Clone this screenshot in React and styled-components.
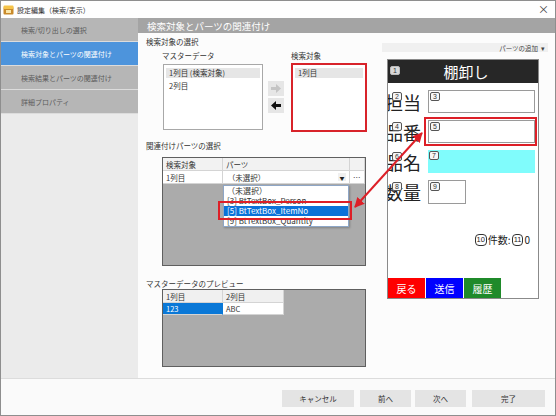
import React from 'react';
import styled, { createGlobalStyle } from 'styled-components';

const Global = createGlobalStyle`
  html, body { margin: 0; padding: 0; background: #fff; }
  body { font-family: "Noto Sans CJK JP", "Noto Sans", sans-serif; }
  * { box-sizing: border-box; }
`;

const Window = styled.div`
  position: relative;
  width: 556px;
  height: 416px;
  border: 1px solid #8e8e8e;
  background: #fafafa;
  display: flex;
  flex-direction: column;
  overflow: hidden;
`;

const TitleBar = styled.div`
  height: 17px;
  display: flex;
  align-items: center;
  padding: 0 6px 0 2px;
  background: #fefefe;
  font-size: 7px;
  color: #333;
  gap: 3px;
`;

const TitleText = styled.span`
  flex: 1;
`;

const Close = styled.span`
  font-size: 11px;
  color: #444;
  line-height: 1;
`;

const Body = styled.div`
  height: 360px;
  display: flex;
`;

const Sidebar = styled.div`
  width: 137px;
  background: #ebebeb;
  display: flex;
  flex-direction: column;
`;

const NavItem = styled.div`
  height: 24px;
  border-bottom: 1px solid #dcdcdc;
  background: ${p => (p.$active ? '#4d94dc' : '#b6b6b6')};
  color: ${p => (p.$active ? '#fff' : '#5c5c5c')};
  font-size: 7px;
  display: flex;
  align-items: center;
  padding-left: 20px;
`;

const Main = styled.div`
  flex: 1;
  display: flex;
  flex-direction: column;
`;

const HeaderBar = styled.div`
  height: 15px;
  background: #a4a4a4;
  color: #fff;
  font-size: 9.5px;
  display: flex;
  align-items: center;
  padding-left: 9px;
`;

const Content = styled.div`
  flex: 1;
  display: flex;
  background: #fcfcfc;
`;

const LeftCol = styled.div`
  width: 244px;
  padding-left: 8px;
  display: flex;
  flex-direction: column;
`;

const SectionTitle = styled.div`
  font-size: 7.5px;
  line-height: 12px;
  height: 12px;
  color: #333;
  margin-top: ${p => p.$mt || 0}px;
`;

const SelectRow = styled.div`
  display: flex;
  margin: 2px 0 0 16px;
`;

const Col = styled.div`
  display: flex;
  flex-direction: column;
`;

const Label = styled.div`
  font-size: 7.5px;
  line-height: 12px;
  height: 12px;
  color: #333;
`;

const ListBox = styled.div`
  width: ${p => p.$w}px;
  height: ${p => p.$h}px;
  margin-top: ${p => p.$mt}px;
  margin-left: ${p => p.$ml || 0}px;
  background: #fff;
  border: ${p => (p.$red ? '2px solid #d8232a' : '1px solid #a8a8a8')};
  padding: 2px;
`;

const ListRow = styled.div`
  font-size: 7.5px;
  line-height: 10px;
  height: 10px;
  padding-left: 3px;
  color: #333;
  background: ${p => (p.$hl ? '#e6e6e6' : 'transparent')};
  margin-top: ${p => p.$mt || 0}px;
`;

const ArrowCol = styled.div`
  display: flex;
  flex-direction: column;
  gap: 2px;
  padding-top: 31px;
  margin: 0 7px 0 5px;
`;

const ArrowBtn = styled.div`
  width: 16px;
  height: 15px;
  background: #e6e6e6;
  display: flex;
  align-items: center;
  justify-content: center;
`;

const GridBox = styled.div`
  position: relative;
  width: 204px;
  height: ${p => p.$h}px;
  margin: ${p => p.$mt}px 0 0 16px;
  border: 1px solid #5f5f5f;
  background: #ababab;
`;

const GridRow = styled.div`
  display: flex;
  height: ${p => p.$h}px;
  background: ${p => p.$bg || 'transparent'};
`;

const Cell = styled.div`
  width: ${p => (p.$w ? `${p.$w}px` : 'auto')};
  flex: ${p => (p.$w ? 'none' : '1')};
  font-size: 7.5px;
  display: flex;
  align-items: center;
  padding-left: 3px;
  color: ${p => (p.$sel ? '#fff' : '#333')};
  background: ${p => p.$bg || 'transparent'};
  border-right: 1px solid ${p => p.$line || '#d4d4d4'};
  border-bottom: 1px solid #d4d4d4;
  position: relative;
`;

const ComboArrow = styled.span`
  position: absolute;
  right: 3px;
  top: 2px;
  width: 8px;
  height: 8px;
  background: #f0f0f0;
  font-size: 5px;
  display: flex;
  align-items: center;
  justify-content: center;
  color: #222;
`;

const DropList = styled.div`
  position: absolute;
  left: 60px;
  top: 27px;
  width: 126px;
  background: #fff;
  border: 1px solid #8ea6c6;
  box-shadow: 1px 1px 2px rgba(0, 0, 0, 0.25);
`;

const DropItem = styled.div`
  font-size: 8px;
  line-height: 10px;
  height: 10px;
  padding-left: 3px;
  white-space: nowrap;
  overflow: hidden;
  color: ${p => (p.$sel ? '#fff' : '#333')};
  background: ${p => (p.$sel ? '#0a72d8' : 'transparent')};
`;

const RedFrame = styled.div`
  position: absolute;
  border: 2.5px solid #dd1f27;
  pointer-events: none;
  left: ${p => p.$l}px;
  top: ${p => p.$t}px;
  right: ${p => p.$r ?? 'auto'};
  bottom: ${p => p.$b ?? 'auto'};
  width: ${p => (p.$w ? `${p.$w}px` : 'auto')};
  height: ${p => (p.$h ? `${p.$h}px` : 'auto')};
`;

const RightCol = styled.div`
  width: 166px;
  display: flex;
  flex-direction: column;
`;

const Toolbar = styled.div`
  margin-top: 10px;
  height: 9px;
  background: #f0f0f0;
  display: flex;
  justify-content: flex-end;
  align-items: center;
  padding-right: 3px;
  font-size: 6.5px;
  color: #444;
  gap: 3px;
`;

const Phone = styled.div`
  margin: 7px 0 0 5px;
  width: 152px;
  height: 240px;
  border: 1px solid #8a8a8a;
  background: #fff;
  display: flex;
  flex-direction: column;
  overflow: hidden;
`;

const PhoneHeader = styled.div`
  position: relative;
  height: 23px;
  background: #272727;
  color: #fff;
  font-size: 15px;
  display: flex;
  align-items: center;
  justify-content: center;
  padding-left: 6px;
`;

const Badge = styled.span`
  position: absolute;
  left: ${p => p.$l}px;
  top: ${p => p.$t}px;
  min-width: 10px;
  height: 9px;
  padding: 0 1.5px;
  border: 1px solid ${p => (p.$dark ? '#bbb' : '#555')};
  border-radius: 2px;
  background: ${p => (p.$dark ? '#d8d8d8' : '#f6f6f6')};
  color: #333;
  font-size: 7px;
  line-height: 7px;
  display: flex;
  align-items: center;
  justify-content: center;
  font-family: "Liberation Sans", sans-serif;
`;

const Fields = styled.div`
  display: flex;
  flex-direction: column;
  gap: 7px;
  padding-top: 7px;
`;

const FieldRow = styled.div`
  display: flex;
  height: 23px;
`;

const FieldLabel = styled.div`
  position: relative;
  width: 40px;
  overflow: hidden;
  display: flex;
  justify-content: flex-end;
  align-items: center;
  padding-right: 7px;
  font-size: 18px;
  color: #222;
  white-space: nowrap;
`;

const FieldBox = styled.div`
  position: relative;
  width: ${p => p.$w}px;
  height: ${p => p.$h || 23}px;
  border: ${p => (p.$cyan ? 'none' : '1px solid #9a9a9a')};
  background: ${p => (p.$cyan ? '#80fcfc' : '#fff')};
`;

const CountRow = styled.div`
  margin-top: 30px;
  height: 13px;
  display: flex;
  justify-content: flex-end;
  align-items: center;
  padding-right: 8px;
  font-size: 10px;
  color: #222;
  gap: 1px;
`;

const RoundBadge = styled.span`
  height: 12px;
  min-width: 11px;
  border: 1px solid #333;
  border-radius: 4px;
  font-size: 7.5px;
  display: inline-flex;
  align-items: center;
  justify-content: center;
  padding: 0 1px;
  font-family: "Liberation Sans", sans-serif;
`;

const PhoneButtons = styled.div`
  margin-top: auto;
  height: 20px;
  display: flex;
  gap: 1px;
`;

const PhoneButton = styled.div`
  width: 37px;
  height: 20px;
  background: ${p => p.$bg};
  color: #fff;
  font-size: 10px;
  display: flex;
  align-items: center;
  justify-content: center;
`;

const Footer = styled.div`
  flex: 1;
  border-top: 1px solid #dcdcdc;
  background: #fafafa;
  display: flex;
  justify-content: flex-end;
  padding: 11px 10px 0 0;
`;

const FootButton = styled.div`
  width: ${p => p.$w}px;
  height: 17px;
  margin-left: ${p => p.$ml}px;
  background: #e4e4e4;
  font-size: 7.5px;
  color: #333;
  display: flex;
  align-items: center;
  justify-content: center;
`;

const Overlay = styled.svg`
  position: absolute;
  left: -1px;
  top: -1px;
  pointer-events: none;
`;

const AppIcon = () => (
  <svg width="11" height="10" viewBox="0 0 11 10">
    <rect x="0.5" y="2" width="10" height="7.5" rx="1" fill="#c98a2a" />
    <rect x="0.5" y="0.5" width="10" height="3.5" rx="1" fill="#f5c44a" />
    <rect x="3" y="5" width="5" height="3" fill="#fbe6a8" />
  </svg>
);

const ArrowGlyph = ({ dir, color }) => (
  <svg width="10" height="9" viewBox="0 0 10 9">
    {dir === 'right' ? (
      <path d="M0 3h5V0l5 4.5L5 9V6H0z" fill={color} />
    ) : (
      <path d="M10 3H5V0L0 4.5 5 9V6h5z" fill={color} />
    )}
  </svg>
);

export default function App() {
  return (
    <>
      <Global />
      <Window>
        <TitleBar>
          <AppIcon />
          <TitleText>設定編集（検索/表示）</TitleText>
          <Close>×</Close>
        </TitleBar>
        <Body>
          <Sidebar>
            <NavItem>検索/切り出しの選択</NavItem>
            <NavItem $active>検索対象とパーツの関連付け</NavItem>
            <NavItem>検索結果とパーツの関連付け</NavItem>
            <NavItem>詳細プロパティ</NavItem>
          </Sidebar>
          <Main>
            <HeaderBar>検索対象とパーツの関連付け</HeaderBar>
            <Content>
              <LeftCol>
                <SectionTitle $mt={3}>検索対象の選択</SectionTitle>
                <SelectRow>
                  <Col>
                    <Label>マスターデータ</Label>
                    <ListBox $w={100} $h={66} $mt={2} $ml={1}>
                      <ListRow $hl $mt={1}>1列目 (検索対象)</ListRow>
                      <ListRow $mt={3}>2列目</ListRow>
                    </ListBox>
                  </Col>
                  <ArrowCol>
                    <ArrowBtn><ArrowGlyph dir="right" color="#c4c4c4" /></ArrowBtn>
                    <ArrowBtn><ArrowGlyph dir="left" color="#111" /></ArrowBtn>
                  </ArrowCol>
                  <Col>
                    <Label>検索対象</Label>
                    <ListBox $w={76} $h={69} $mt={1} $red>
                      <ListRow $hl $mt={1}>1列目</ListRow>
                    </ListBox>
                  </Col>
                </SelectRow>
                <SectionTitle $mt={8}>関連付けパーツの選択</SectionTitle>
                <GridBox $h={109} $mt={5}>
                  <GridRow $h={13} $bg="#f2f2f2">
                    <Cell $w={60}>検索対象</Cell>
                    <Cell $w={127}>パーツ</Cell>
                    <Cell />
                  </GridRow>
                  <GridRow $h={13} $bg="#fff">
                    <Cell $w={60}>1列目</Cell>
                    <Cell $w={127}>
                      &nbsp;（未選択）
                      <ComboArrow>▼</ComboArrow>
                    </Cell>
                    <Cell>…</Cell>
                  </GridRow>
                  <DropList>
                    <DropItem>（未選択）</DropItem>
                    <DropItem>[3] BtTextBox_Person</DropItem>
                    <DropItem $sel>[5] BtTextBox_ItemNo</DropItem>
                    <DropItem>[9] BtTextBox_Quantity</DropItem>
                  </DropList>
                  <RedFrame $l={55} $t={43} $w={134} $h={19} />
                </GridBox>
                <SectionTitle $mt={12}>マスターデータのプレビュー</SectionTitle>
                <GridBox $h={78} $mt={-1}>
                  <GridRow $h={13}>
                    <Cell $w={60} $bg="#f0f0f0">1列目</Cell>
                    <Cell $w={61} $bg="#f0f0f0">2列目</Cell>
                  </GridRow>
                  <GridRow $h={12}>
                    <Cell $w={60} $bg="#0a78d7" $sel $line="#0a78d7">123</Cell>
                    <Cell $w={61} $bg="#fff">ABC</Cell>
                  </GridRow>
                </GridBox>
              </LeftCol>
              <RightCol>
                <Toolbar>パーツの追加 <span>▾</span></Toolbar>
                <Phone>
                  <PhoneHeader>
                    <Badge $l={2} $t={6} $dark>1</Badge>
                    棚卸し
                  </PhoneHeader>
                  <Fields>
                    <FieldRow>
                      <FieldLabel>担当<Badge $l={4} $t={2}>2</Badge></FieldLabel>
                      <FieldBox $w={107}><Badge $l={1} $t={1}>3</Badge></FieldBox>
                    </FieldRow>
                    <FieldRow>
                      <FieldLabel>品番<Badge $l={4} $t={2}>4</Badge></FieldLabel>
                      <FieldBox $w={107}>
                        <Badge $l={1} $t={1}>5</Badge>
                        <RedFrame $l={-5} $t={-4} $r="-3px" $b="-4px" />
                      </FieldBox>
                    </FieldRow>
                    <FieldRow>
                      <FieldLabel>品名<Badge $l={4} $t={2}>6</Badge></FieldLabel>
                      <FieldBox $w={107} $cyan><Badge $l={1} $t={1}>7</Badge></FieldBox>
                    </FieldRow>
                    <FieldRow>
                      <FieldLabel>数量<Badge $l={4} $t={2}>8</Badge></FieldLabel>
                      <FieldBox $w={38} $h={24}><Badge $l={1} $t={1}>9</Badge></FieldBox>
                    </FieldRow>
                  </Fields>
                  <CountRow>
                    <RoundBadge>10</RoundBadge>件数:<RoundBadge>11</RoundBadge>0
                  </CountRow>
                  <PhoneButtons>
                    <PhoneButton $bg="#ff0000">戻る</PhoneButton>
                    <PhoneButton $bg="#0000ff">送信</PhoneButton>
                    <PhoneButton $bg="#1f8a2a">履歴</PhoneButton>
                  </PhoneButtons>
                </Phone>
              </RightCol>
            </Content>
          </Main>
        </Body>
        <Footer>
          <FootButton $w={72} $ml={0}>キャンセル</FootButton>
          <FootButton $w={51} $ml={6}>前へ</FootButton>
          <FootButton $w={51} $ml={4}>次へ</FootButton>
          <FootButton $w={73} $ml={6}>完了</FootButton>
        </Footer>
        <Overlay width="556" height="416" viewBox="0 0 556 416">
          <defs>
            <marker id="ah" viewBox="0 0 10 10" refX="9" refY="5" markerWidth="5" markerHeight="5" orient="auto-start-reverse">
              <path d="M0 0L10 5L0 10z" fill="#dd1f27" />
            </marker>
          </defs>
          <line x1="355" y1="207" x2="422" y2="133" stroke="#dd1f27" strokeWidth="2" markerStart="url(#ah)" markerEnd="url(#ah)" />
        </Overlay>
      </Window>
    </>
  );
}
